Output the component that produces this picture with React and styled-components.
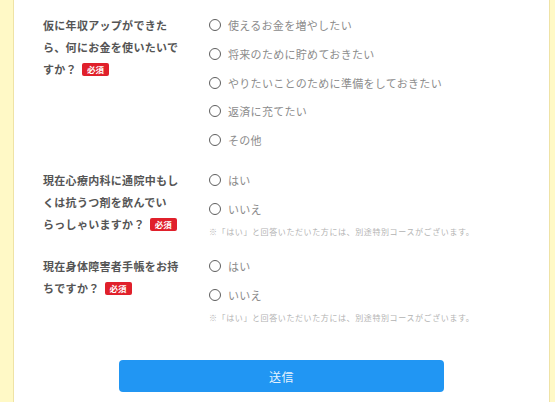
import React from 'react'
import styled, { createGlobalStyle } from 'styled-components'

const GlobalStyle = createGlobalStyle`
    html, body {
        margin: 0;
        padding: 0;
        background: #fff9c6;
    }

    body {
        font-family: "Noto Sans CJK JP", "Noto Sans", sans-serif;
    }
`;

const Page = styled.div`
    height: 402px;
    overflow: hidden;
    padding: 0 5px 0 13px;
`;

const Panel = styled.form`
    background: #fff;
    border-left: 1px solid #efe3a6;
    border-right: 1px solid #efe3a6;
    padding: 14px 29px 40px;
    min-height: 420px;
    box-sizing: border-box;
`;

const Question = styled.div`
    display: grid;
    grid-template-columns: 140px 1fr;
    column-gap: 26px;
    margin-bottom: 18px;
`;

const Label = styled.div`
    font-size: 11px;
    letter-spacing: 0.3px;
    line-height: 22px;
    font-weight: 700;
    color: #555;
`;

const Badge = styled.span`
    display: inline-block;
    margin-left: 5px;
    width: 27px;
    height: 13px;
    line-height: 13px;
    text-align: center;
    background: #e0202b;
    color: #fff;
    font-size: 8.5px;
    letter-spacing: 0;
    border-radius: 2px;
    vertical-align: 1px;
`;

const Options = styled.div`
    display: flex;
    flex-direction: column;
    gap: 6.75px;
`;

const Option = styled.label`
    display: flex;
    align-items: center;
    gap: 7px;
    height: 22px;
    font-size: 11px;
    letter-spacing: 0.3px;
    color: #8c8c8c;
`;

const Circle = styled.span`
    width: 10px;
    height: 10px;
    border: 1.6px solid #5e5e5e;
    border-radius: 50%;
    flex: none;
`;

const Note = styled.p`
    margin: 6px 0 0;
    font-size: 8px;
    letter-spacing: 0.6px;
    line-height: 11px;
    color: #b3b3b3;
`;

const Submit = styled.button`
    display: block;
    margin: 37.5px auto 0;
    width: 325px;
    height: 32px;
    border: none;
    border-radius: 4px;
    background: #2196f3;
    color: rgba(255, 255, 255, 0.9);
    font-family: inherit;
    font-size: 12px;
    letter-spacing: 0.5px;
`;

const NOTE = '※「はい」と回答いただいた方には、別途特別コースがございます。';

const questions = [
    {
        lines: ['仮に年収アップができた', 'ら、何にお金を使いたいで', 'すか？'],
        options: [
            '使えるお金を増やしたい',
            '将来のために貯めておきたい',
            'やりたいことのために準備をしておきたい',
            '返済に充てたい',
            'その他',
        ],
    },
    {
        lines: ['現在心療内科に通院中もし', 'くは抗うつ剤を飲んでい', 'らっしゃいますか？'],
        options: ['はい', 'いいえ'],
        note: NOTE,
    },
    {
        lines: ['現在身体障害者手帳をお持', 'ちですか？'],
        options: ['はい', 'いいえ'],
        note: NOTE,
    },
];

export default function App() {
    return (
        <>
            <GlobalStyle />
            <Page>
                <Panel onSubmit={e => e.preventDefault()}>
                    {questions.map((q, i) => (
                        <Question key={i}>
                            <Label>
                                {q.lines.map((line, j) => (
                                    <React.Fragment key={j}>
                                        {j > 0 && <br />}
                                        {line}
                                    </React.Fragment>
                                ))}
                                <Badge>必須</Badge>
                            </Label>
                            <div>
                                <Options>
                                    {q.options.map(opt => (
                                        <Option key={opt}>
                                            <Circle />
                                            {opt}
                                        </Option>
                                    ))}
                                </Options>
                                {q.note && <Note>{q.note}</Note>}
                            </div>
                        </Question>
                    ))}
                    <Submit type="submit">送信</Submit>
                </Panel>
            </Page>
        </>
    )
}
